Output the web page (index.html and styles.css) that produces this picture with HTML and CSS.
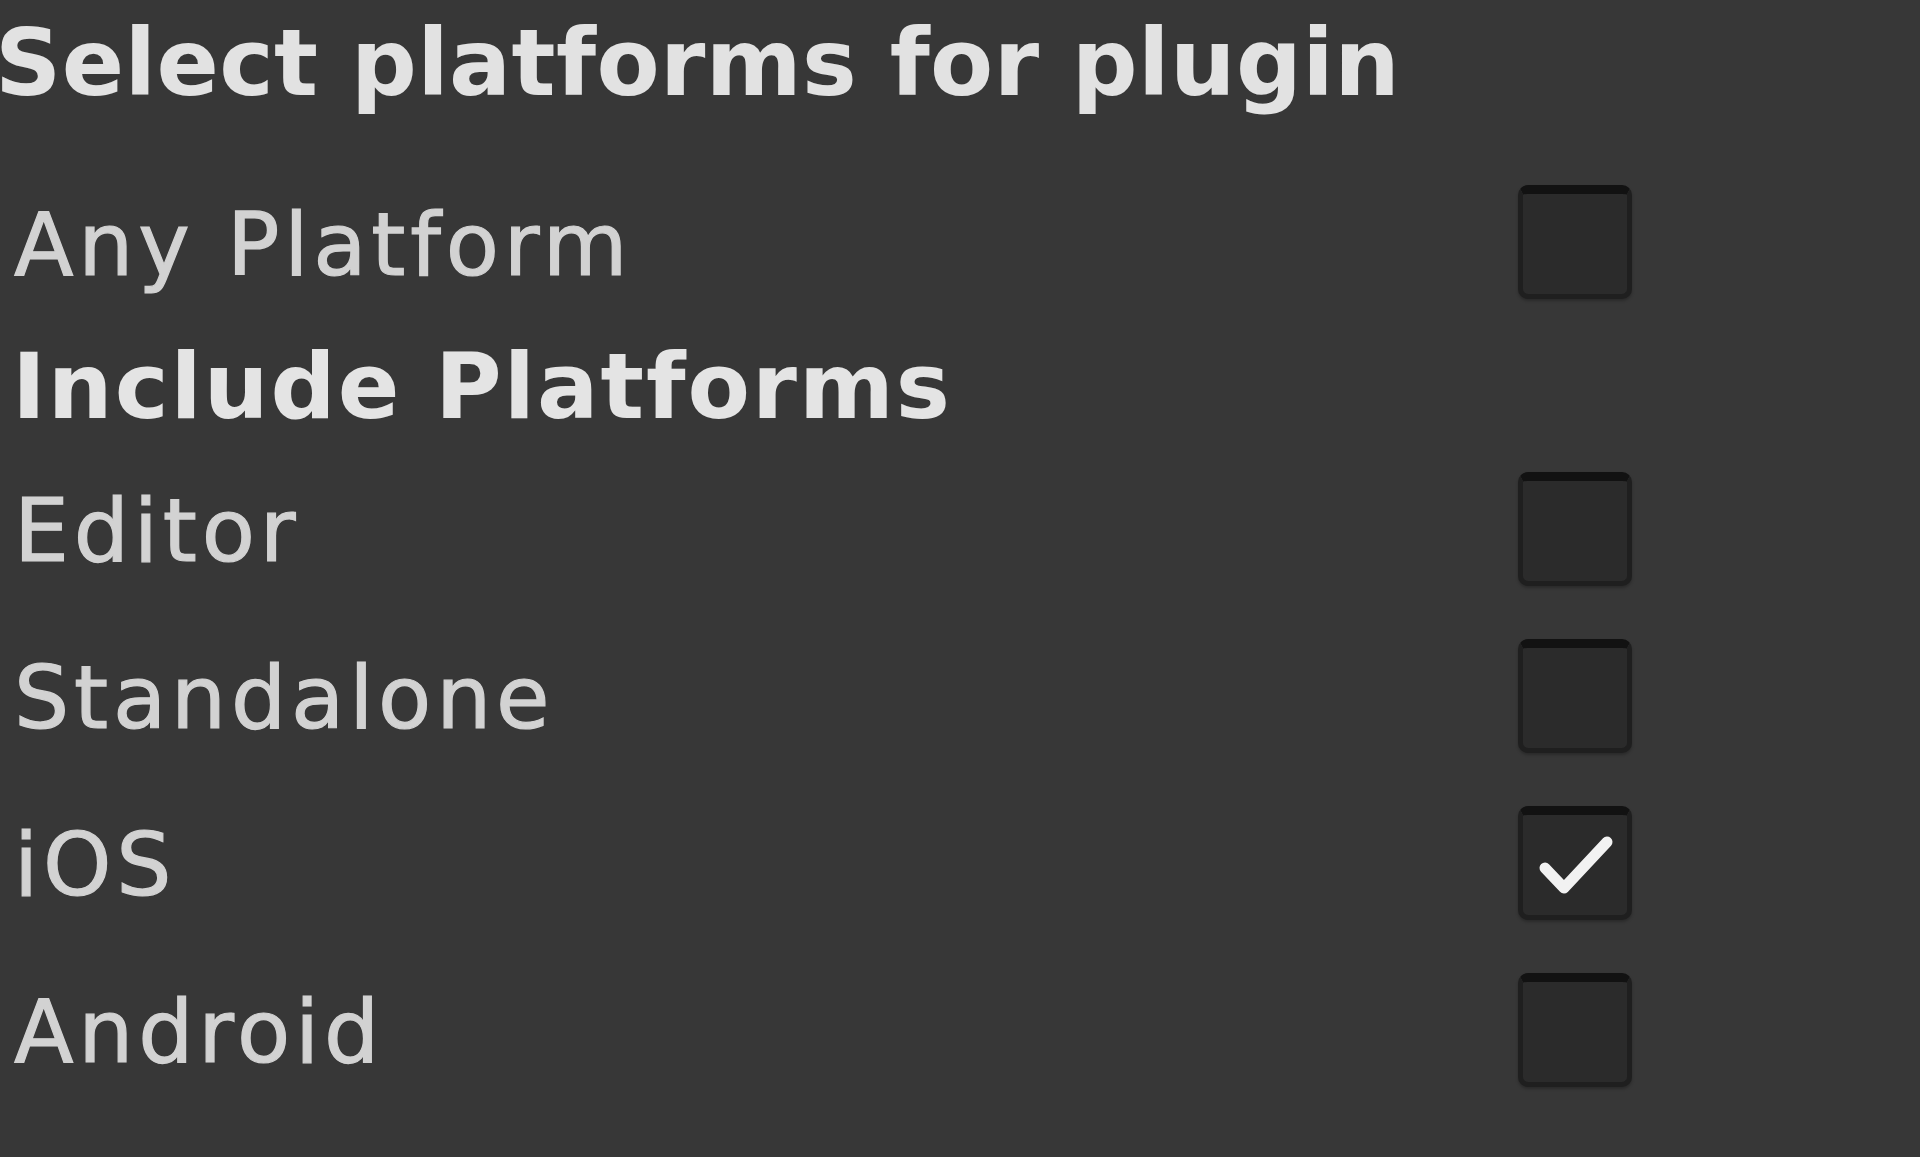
FILE: index.html
```html
<!DOCTYPE html>
<html lang="en">
<head>
    <meta charset="UTF-8">
    <title>Plugin Platforms</title>
    <link rel="stylesheet" href="styles.css">
</head>
<body>
    <div class="panel">
        <div class="title">Select platforms for plugin</div>

        <div class="row row-any">
            <span class="label">Any Platform</span>
            <span class="toggle"></span>
        </div>

        <div class="row row-section">
            <span class="label bold">Include Platforms</span>
        </div>

        <div class="row">
            <span class="label">Editor</span>
            <span class="toggle"></span>
        </div>

        <div class="row">
            <span class="label">Standalone</span>
            <span class="toggle"></span>
        </div>

        <div class="row">
            <span class="label">iOS</span>
            <span class="toggle checked">
                <svg viewBox="0 0 114 114" width="114" height="114">
                    <polyline points="27,62 46,82 89,36" fill="none" stroke="#f2f2f2" stroke-width="11" stroke-linecap="round" stroke-linejoin="round"/>
                </svg>
            </span>
        </div>

        <div class="row">
            <span class="label">Android</span>
            <span class="toggle"></span>
        </div>
    </div>
</body>
</html>
```

FILE: styles.css
```css
html,
body {
    margin: 0;
    height: 100%;
    background-color: #373737;
}

.panel {
    font-family: "DejaVu Sans", Verdana, sans-serif;
    color: #d2d2d2;
    overflow: hidden;
}

.title {
    box-sizing: border-box;
    height: 157px;
    padding-top: 10px;
    margin-left: -5px;
    font-size: 92px;
    font-weight: bold;
    letter-spacing: 0.4px;
    color: #e2e2e2;
    white-space: nowrap;
}

.row {
    display: grid;
    grid-template-columns: 1518px 114px;
    align-items: center;
    height: 167px;
}

.row-any {
    height: 170px;
}

.row-section {
    height: 118px;
}

.label {
    padding-left: 14px;
    padding-top: 6px;
    font-size: 87px;
    letter-spacing: 4.8px;
    line-height: 1;
    white-space: nowrap;
    -webkit-text-stroke: 1.2px #d2d2d2;
}

.label.bold {
    padding-left: 12px;
    padding-top: 0;
    font-weight: bold;
    color: #e4e4e4;
    font-size: 91px;
    letter-spacing: 2px;
    -webkit-text-stroke: 0;
}

.toggle {
    box-sizing: border-box;
    position: relative;
    width: 114px;
    height: 114px;
    border-radius: 10px;
    background-color: #2b2b2b;
    border: 5px solid #1f1f1f;
    border-top: 9px solid #121212;
    box-shadow: 0 2px 3px rgba(0, 0, 0, 0.25);
}

.toggle svg {
    position: absolute;
    left: -5px;
    top: -9px;
}
```
